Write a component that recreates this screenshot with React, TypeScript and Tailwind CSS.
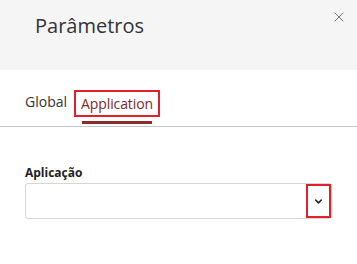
import { X, ChevronDown } from "lucide-react";

export default function App() {
  return (
    <div className="w-[357px] h-[264px] bg-white font-['Open_Sans',sans-serif] overflow-hidden">
      {/* Cabeçalho */}
      <div className="h-[70px] bg-[#f5f5f5] flex justify-between pl-[35px] pr-[10px]">
        <h1 className="text-[20px] leading-[26px] mt-[13px] text-[#333]">Parâmetros</h1>
        <button className="mt-[9px] h-[16px] w-[16px] text-[#555]" aria-label="Fechar">
          <X size={16} strokeWidth={1.2} />
        </button>
      </div>

      {/* Abas */}
      <div className="border-b border-[#c8c8c8] h-[57px] flex items-end pl-[25px] gap-[7px]">
        <div className="text-[14px] text-[#333] pb-[14px]">Global</div>
        <div className="flex flex-col items-center">
          <div className="border-2 border-[#e0202a] px-[5px] h-[27px] flex items-center text-[14px] text-[#7b2a2a] tracking-[-0.1px]">
            Application
          </div>
          <div className="w-[70px] h-[3px] bg-[#8c2b2b] mt-[4px] mb-[2px]" />
        </div>
      </div>

      {/* Formulário */}
      <div className="px-[25px] pt-[38px]">
        <label className="block text-[12px] font-bold text-[#222] leading-[16px]">Aplicação</label>
        <div className="mt-[2px] w-[307px] h-[36px] border border-[#d6d6d6] rounded-[3px] flex justify-end">
          <div className="w-[25px] h-full border-2 border-[#e0202a] flex items-center justify-center text-[#222]">
            <ChevronDown size={11} strokeWidth={3.2} />
          </div>
        </div>
      </div>
    </div>
  );
}
